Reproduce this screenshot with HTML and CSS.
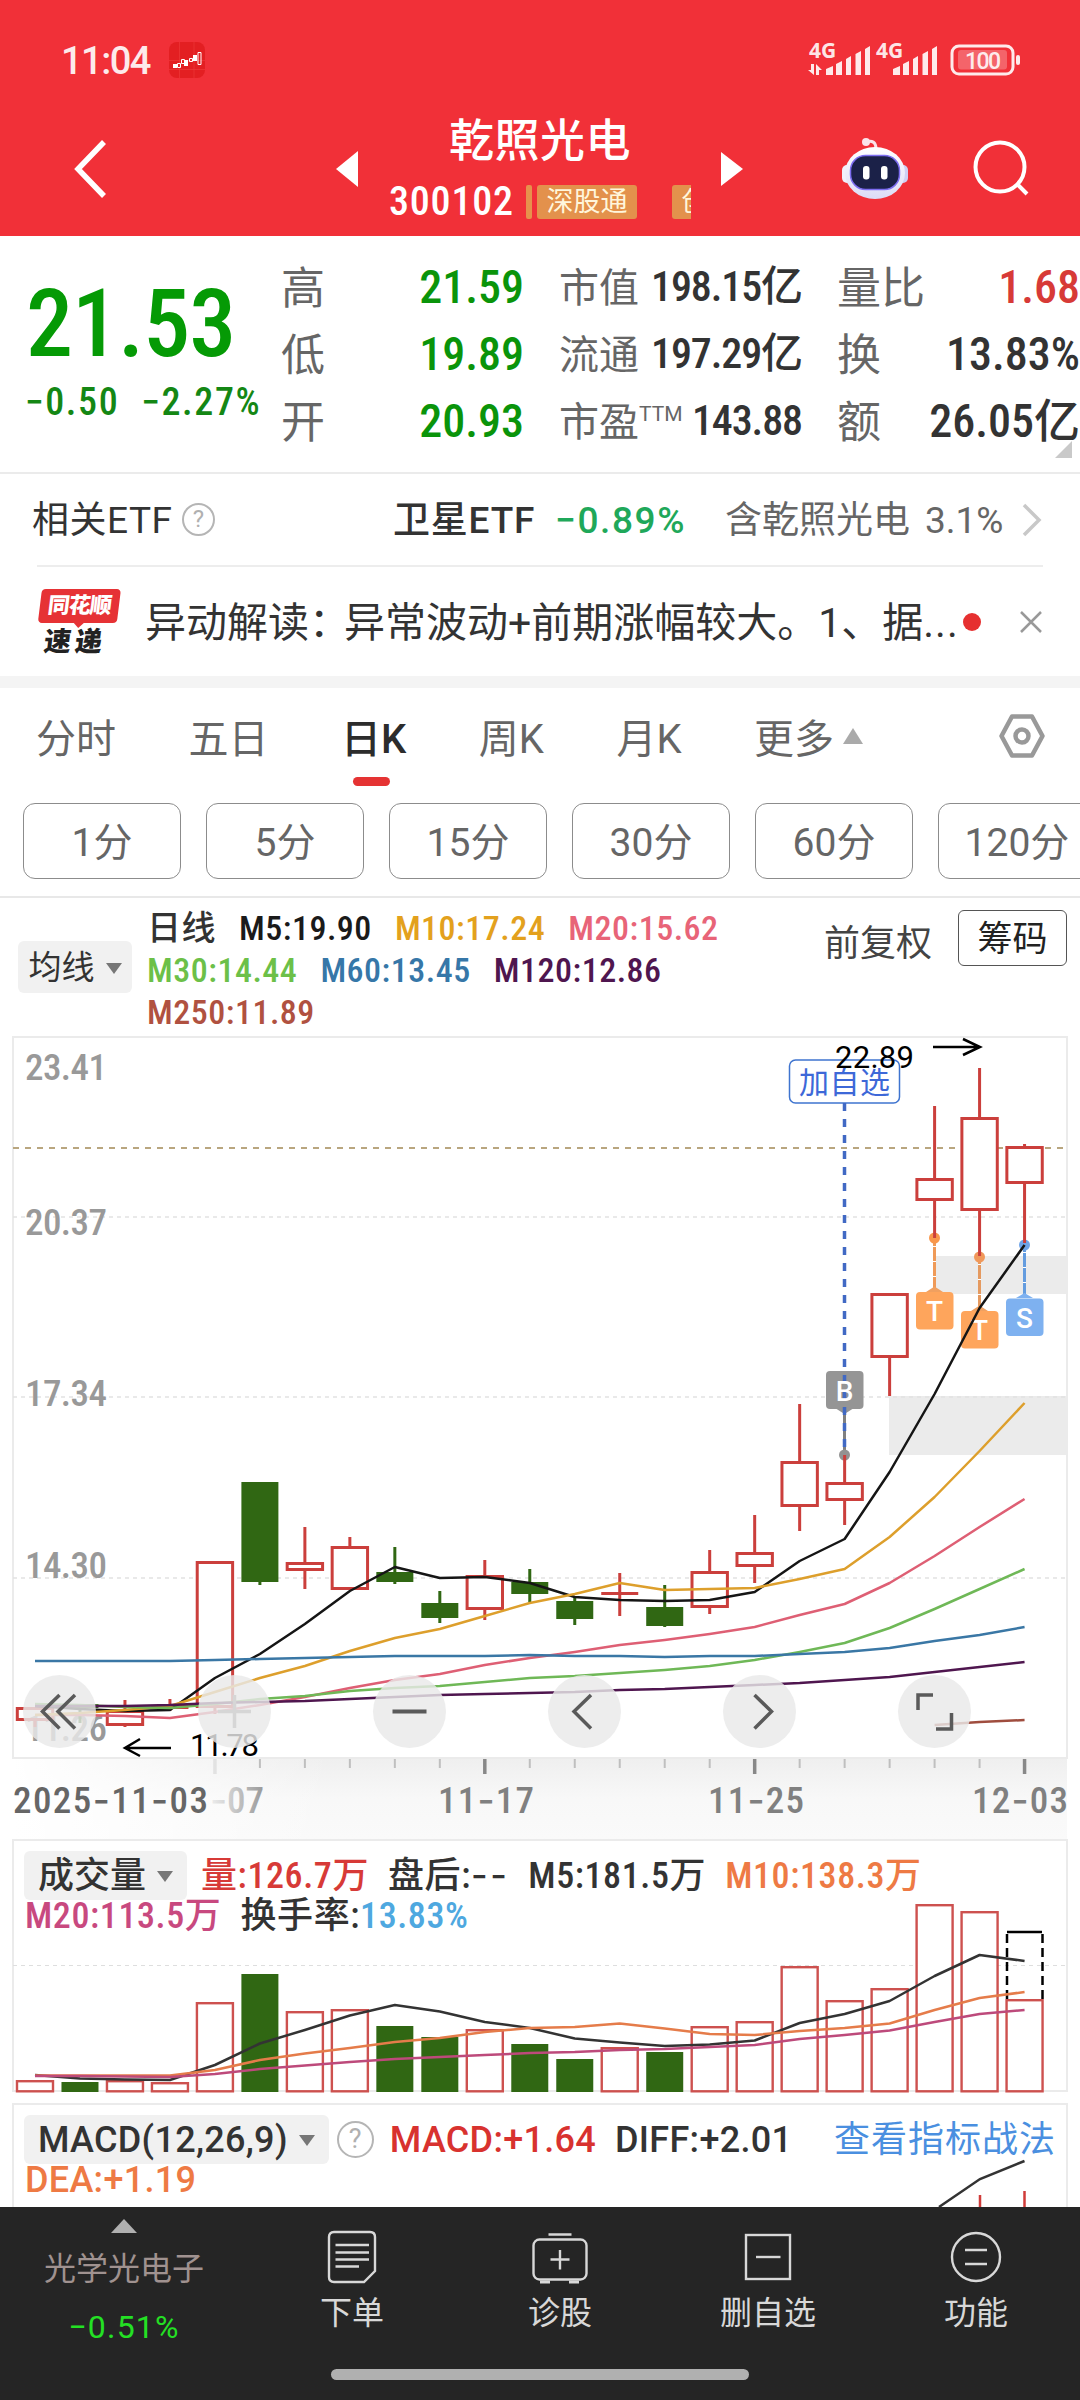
FILE: index.html
```html
<!DOCTYPE html>
<html lang="zh-CN">
<head>
    <meta charset="UTF-8">
    <meta name="viewport" content="width=device-width, initial-scale=1.0">
    <title>乾照光电 300102</title>
    <link rel="stylesheet" href="styles.css">
</head>
<body>

    <header class="top">
        <div class="status">
            <span class="clock">11:04</span>
            <svg class="app-icon" width="36" height="36" viewBox="0 0 36 36">
                <rect width="36" height="36" rx="8" fill="#e31f22"/>
                <path d="M10.500 0V36M0 18.500H36M0 27.500H36M25 0V36" stroke="#ee3c3c" stroke-width=".6"/>
                <path d="M4 22h4v4H4zM15 18h4v6h-4zM24 13h4v6h-4z" fill="#fff"/>
                <path d="M8.500 21.500h3v4h-3zM12.500 17.500h3v4h-3zM20.500 16.500h3v3h-3zM29 10.500h3v12h-3z" fill="none" stroke="#fff"/>
            </svg>
            <svg class="signals" width="215" height="40" viewBox="806 40 215 40">
                <g fill="#fff" fill-opacity=".9">
                    <text x="809" y="58" class="net">4G</text>
                    <path d="M826 75v-6l7-3v9zM836 75V64l6-3v14zM846 75V59l5-3v19zM855.500 75V54l5.500-3v24zM865 75V49l5-3v29z"/>
                    <path d="M811 64h3v11l-6-5h3zM816 75V64l6 6h-3v5z"/>
                    <text x="876" y="58" class="net">4G</text>
                    <path d="M893 75v-6l7-3v9zM903 75V64l6-3v14zM913 75V59l5-3v19zM922.500 75V54l5.500-3v24zM932 75V49l5-3v29z"/>
                    <rect x="958" y="50" width="49" height="19.500" rx="3" fill-opacity=".25"/>
                    <rect x="1016" y="55" width="4" height="10" rx="2"/>
                    <text x="965" y="69" class="pct" textLength="36">100</text>
                </g>
                <rect x="952" y="46" width="61" height="28" rx="7" fill="none" stroke="#fff" stroke-opacity=".9" stroke-width="3"/>
            </svg>
        </div>
        <div class="nav">
            <svg class="back" width="36" height="62" viewBox="0 0 36 62"><path d="M31 4 5 31 31 58" fill="none" stroke="#fff" stroke-width="5.500"/></svg>
            <svg class="prev" width="22" height="36" viewBox="0 0 22 36"><path d="M0 18 22 0V36z" fill="#fff"/></svg>
            <div class="stock">
                <h1>乾照光电</h1>
                <div class="code-row">
                    <span class="num code">300102</span>
                    <i class="tag-bar"></i>
                    <span class="tag">深股通</span>
                    <span class="tag next-tag">创业板</span>
                </div>
            </div>
            <svg class="next" width="22" height="34" viewBox="0 0 22 34"><path d="M0 0 22 17 0 34z" fill="#fff"/></svg>
            <svg class="robot" width="66" height="62" viewBox="842 137 66 62">
                <defs>
                    <linearGradient id="shell" x1="0" y1="0" x2="0" y2="1">
                        <stop offset="0" stop-color="#fff"/>
                        <stop offset="1" stop-color="#dcdcf6"/>
                    </linearGradient>
                </defs>
                <path d="M866 141c6-2 10 0 10 7" fill="none" stroke="#fbe3ea" stroke-width="3"/>
                <circle cx="866" cy="141" r="4" fill="#fbe3ea"/>
                <rect x="842" y="164" width="12" height="18" rx="5" fill="#f1f1fc"/>
                <rect x="896" y="164" width="12" height="18" rx="5" fill="#cfd0f4"/>
                <ellipse cx="875" cy="172" rx="30" ry="26" fill="url(#shell)"/>
                <rect x="850.500" y="154.500" width="49" height="34" rx="15" fill="#1b2148" stroke="#7d6df0" stroke-width="1.500"/>
                <rect x="863" y="165" width="6.500" height="13.500" rx="3" fill="#fff"/>
                <rect x="881" y="165" width="6.500" height="13.500" rx="3" fill="#fff"/>
            </svg>
            <svg class="search" width="58" height="58" viewBox="0 0 58 58"><g fill="none" stroke="#fff" stroke-width="4"><circle cx="27" cy="27" r="24.500"/><path d="M43.500 43.500 54 54"/></g></svg>
        </div>
    </header>

    <section class="quote">
        <div class="price-box">
            <div class="num price">21.53</div>
            <div class="num change"><span>−0.50</span><span>−2.27%</span></div>
        </div>
        <dl class="col col-a">
            <div><dt>高</dt><dd class="num green">21.59</dd></div>
            <div><dt>低</dt><dd class="num green">19.89</dd></div>
            <div><dt>开</dt><dd class="num green">20.93</dd></div>
        </dl>
        <dl class="col col-b">
            <div><dt>市值</dt><dd class="num">198.15亿</dd></div>
            <div><dt>流通</dt><dd class="num">197.29亿</dd></div>
            <div><dt>市盈<sup>TTM</sup></dt><dd class="num">143.88</dd></div>
        </dl>
        <dl class="col col-c">
            <div><dt>量比</dt><dd class="num red">1.68</dd></div>
            <div><dt>换</dt><dd class="num">13.83%</dd></div>
            <div><dt>额</dt><dd class="num">26.05亿</dd></div>
        </dl>
        <i class="corner"></i>
    </section>

    <section class="etf">
        <span class="etf-label">相关ETF</span>
        <span class="help">?</span>
        <span class="etf-name">卫星ETF</span>
        <span class="etf-change">−0.89%</span>
        <span class="etf-hold">含乾照光电</span>
        <span class="etf-pct">3.1%</span>
        <svg width="20" height="34" viewBox="0 0 20 34"><path d="M2 2 17 17 2 32" fill="none" stroke="#c8c8c8" stroke-width="3.500"/></svg>
    </section>

    <section class="news">
        <div class="logo"><b>同花顺</b><em>速递</em></div>
        <p>异动解读<span class="colon">：</span>异常波动+前期涨幅较大。1、据<span class="dots">...</span></p>
        <i class="dot"></i>
        <svg width="22" height="22" viewBox="0 0 22 22"><path d="M1 1 21 21M21 1 1 21" stroke="#999" stroke-width="2.500"/></svg>
    </section>

    <nav class="tabs">
        <span>分时</span>
        <span>五日</span>
        <span class="active">日K</span>
        <span>周K</span>
        <span>月K</span>
        <span>更多</span>
        <i class="up"></i>
        <svg width="46" height="46" viewBox="0 0 46 46"><g fill="none" stroke="#999" stroke-width="4.500"><path d="M13 3.500H33L43.500 23 33 42.500H13L2.500 23z" stroke-linejoin="round"/><circle cx="23" cy="23" r="6.500"/></g></svg>
    </nav>

    <div class="minutes">
        <button>1分</button>
        <button>5分</button>
        <button>15分</button>
        <button>30分</button>
        <button>60分</button>
        <button>120分</button>
    </div>

    <section class="ma">
        <span class="chip">均线<i class="down"></i></span>
        <div class="ma-list num">
            <div><span>日线</span><span style="color:#1a1a1a">M5:19.90</span><span style="color:#e3a11d">M10:17.24</span><span style="color:#e86478">M20:15.62</span></div>
            <div><span style="color:#6cc048">M30:14.44</span><span style="color:#3677a8">M60:13.45</span><span style="color:#4f164f">M120:12.86</span></div>
            <div><span style="color:#b05140">M250:11.89</span></div>
        </div>
        <span class="adjust">前复权</span>
        <span class="chips">筹码</span>
    </section>

    <svg class="kline" width="1080" height="805" viewBox="0 1034 1080 805">
        <defs>
            <linearGradient id="axisShade" x1="0" y1="0" x2="0" y2="1">
                <stop offset="0" stop-color="#efefef"/>
                <stop offset=".5" stop-color="#f8f8f8"/>
                <stop offset="1" stop-color="#fafafa"/>
            </linearGradient>
            <linearGradient id="axisFade">
                <stop offset="0" stop-color="#fff"/>
                <stop offset="1" stop-color="#fff" stop-opacity="0"/>
            </linearGradient>
            <linearGradient id="dateFade">
                <stop offset="0" stop-color="#eee"/>
                <stop offset="1" stop-color="#999"/>
            </linearGradient>
        </defs>
        <rect x="13" y="1759" width="1054" height="80" fill="url(#axisShade)"/>
        <rect x="13" y="1759" width="320" height="80" fill="url(#axisFade)"/>
        <rect x="934" y="1256" width="133" height="38" fill="#ebebeb"/>
        <rect x="889" y="1396" width="178" height="59" fill="#ebebeb"/>
        <rect x="13" y="1037" width="1054" height="721" fill="none" stroke="#ebebeb" stroke-width="2"/>
        <path d="M13 1217H1067M13 1397H1067M13 1578H1067" stroke="#e2e2e2" stroke-width="1.300" stroke-dasharray="4 4"/>
        <path d="M13 1148H1067" stroke="#b9a67f" stroke-width="2" stroke-dasharray="6 6"/>
        <g class="scale">
            <text x="25" y="1080" textLength="82">23.41</text>
            <text x="25" y="1235" textLength="82">20.37</text>
            <text x="25" y="1406" textLength="82">17.34</text>
            <text x="25" y="1578" textLength="82">14.30</text>
            <text x="25" y="1741" textLength="82">11.26</text>
        </g>
        <g id="ticks"></g>
        <g class="dates">
            <text x="13" y="1813" textLength="195" fill="#666">2025<tspan>-</tspan>11<tspan>-</tspan>03</text>
            <text x="210" y="1813" textLength="54" fill="url(#dateFade)"><tspan>-</tspan>07</text>
            <text x="438" y="1813" textLength="96">11<tspan>-</tspan>17</text>
            <text x="708" y="1813" textLength="96">11<tspan>-</tspan>25</text>
            <text x="972" y="1813" textLength="96">12<tspan>-</tspan>03</text>
        </g>

        <!-- trade markers -->
        <g stroke-width="3">
            <path d="M934.500 1238V1290" stroke="#ef9a58"/>
            <path d="M979.500 1257V1310" stroke="#e59a60"/>
            <path d="M1024.500 1245V1297" stroke="#649cdf"/>
            <path d="M844.500 1409V1455" stroke="#808080"/>
        </g>
        <path d="M934.500 1246V1290M979.500 1264V1310M1024.500 1252V1297" stroke="#fff" stroke-width="3" stroke-dasharray="1 14"/>
        <circle cx="934.500" cy="1238" r="5.500" fill="#f9974b"/>
        <circle cx="979.500" cy="1257" r="5.500" fill="#f0985a"/>
        <circle cx="1024.500" cy="1245" r="5.500" fill="#6fa4e8"/>
        <circle cx="844.500" cy="1455" r="5.500" fill="#929292"/>
        <path d="M926 1292 934.500 1286.500 943 1292z" fill="#f0a060"/>
        <path d="M971 1311 979.500 1305.500 988 1311z" fill="#f0a060"/>
        <path d="M1016 1298 1024.500 1293 1033 1298z" fill="#7eb1f0"/>
        <path d="M835 1408 844.500 1414 854 1408z" fill="#959595"/>
        <rect x="916" y="1292" width="37.500" height="37.500" rx="4" fill="#fea55c"/>
        <rect x="961" y="1311" width="37.500" height="37.500" rx="4" fill="#fea55c"/>
        <rect x="1006" y="1298.500" width="37.500" height="37.500" rx="4" fill="#7eb1f0"/>
        <rect x="826" y="1371" width="37.500" height="38" rx="4" fill="#959595"/>
        <g class="mark">
            <text x="934.500" y="1321">T</text>
            <text x="979.500" y="1340">T</text>
            <text x="1024.500" y="1328">S</text>
        </g>

        <rect x="789.500" y="1060" width="110" height="43" rx="6" fill="#fff" stroke="#3f74cf" stroke-width="1.500"/>
        <text x="799" y="1093" class="add" textLength="91">加自选</text>
        <path d="M844.500 1103V1452" stroke="#4169c4" stroke-width="3.500" stroke-dasharray="8 8"/>
        <text x="844.500" y="1401" class="mark">B</text>

        <g id="candles"></g>
        <g id="averages" fill="none" stroke-width="2.500" stroke-linejoin="round"></g>

        <g class="extreme">
            <text x="835" y="1068" textLength="79">22.89</text>
            <text x="190" y="1756" textLength="69">11.78</text>
        </g>
        <path d="M933 1047H979M963 1039 980 1047 963 1055M171 1748H126M140 1739 125 1748 140 1756" fill="none" stroke="#000" stroke-width="2.500"/>

        <!-- zoom / pan controls -->
        <g fill="#e9e9e9" fill-opacity=".82">
            <circle cx="59.500" cy="1711.500" r="36.500"/>
            <circle cx="234.500" cy="1711.500" r="36.500"/>
            <circle cx="409.500" cy="1711.500" r="36.500"/>
            <circle cx="584.500" cy="1711.500" r="36.500"/>
            <circle cx="759.500" cy="1711.500" r="36.500"/>
            <circle cx="934.500" cy="1711.500" r="36.500"/>
        </g>
        <path d="M234.500 1695V1728M218 1711.500H251" stroke="#d6d6d6" stroke-width="3.500"/>
        <g fill="none" stroke="#5a5a5a" stroke-width="3.500">
            <path d="M59.500 1695 42.500 1711.500 59.500 1728.500M75 1695 58 1711.500 75 1728.500"/>
            <path d="M392.500 1711.500H426.500" stroke-width="4"/>
            <path d="M591 1695 574 1711.500 591 1728.500"/>
            <path d="M754.500 1695 771.500 1711.500 754.500 1728.500"/>
            <path d="M918 1710V1695H933M936 1729H951.500V1713"/>
        </g>
    </svg>

    <section class="panel volume">
        <svg class="plot" width="1080" height="254" viewBox="0 1838 1080 254">
            <path d="M13 2090H1067" stroke="#ebebeb" stroke-width="2"/>
            <path d="M13 1964.500H1067" stroke="#dedede" stroke-width="1.200" stroke-dasharray="4 4"/>
            <g id="volumes"></g>
            <path d="M1007 1998V1931M1042.500 1998V1931" stroke="#000" stroke-width="2.500" stroke-dasharray="9 5"/>
            <path d="M1007 1931H1042" stroke="#000" stroke-width="2.500"/>
            <g id="volumeAverages" fill="none" stroke-width="2.500" stroke-linejoin="round"></g>
        </svg>
        <div class="legend num">
            <span class="chip">成交量<i class="down"></i></span>
            <span style="color:#d73a37">量:126.7万</span>
            <span>盘后:<span class="dash">--</span></span>
            <span>M5:181.5万</span>
            <span style="color:#ee7a44">M10:138.3万</span>
        </div>
        <div class="legend second num">
            <span style="color:#c8497f">M20:113.5万</span>
            <span>换手率:<b>13.83%</b></span>
        </div>
    </section>

    <section class="panel macd">
        <svg class="plot" width="1080" height="104" viewBox="0 2103 1080 104">
            <path d="M939 2207 980 2179 1024.500 2161" fill="none" stroke="#333" stroke-width="2.500"/>
            <path d="M980 2195V2207M1024.500 2191V2207" stroke="#d03c3a" stroke-width="2.500"/>
        </svg>
        <div class="legend">
            <span class="chip">MACD(12,26,9)<i class="down"></i></span>
            <span class="help">?</span>
            <span style="color:#d8322f">MACD:+1.64</span>
            <span>DIFF:+2.01</span>
            <a>查看指标战法</a>
        </div>
        <div class="legend second"><span style="color:#ee7a44">DEA:+1.19</span></div>
    </section>

    <footer class="bottom">
        <div class="items">
            <div class="sector">
                <i class="up"></i>
                <span>光学光电子</span>
                <span class="sector-change">−0.51%</span>
            </div>
            <div class="item">
                <svg width="52" height="56" viewBox="0 0 52 56"><g fill="none" stroke="#d8d8d8" stroke-width="2.400"><path d="M8 3H44q5 0 5 5V42L38 53H8q-5 0-5-5V8q0-5 5-5z"/><path d="M9.500 16H43M9.500 23.500H43M9.500 30.500H43M9.500 37.500H33"/></g></svg>
                <span>下单</span>
            </div>
            <div class="item">
                <svg width="58" height="56" viewBox="0 0 58 56"><g fill="none" stroke="#d8d8d8" stroke-width="2.400"><rect x="2.500" y="10.500" width="53" height="40" rx="6"/><path d="M17.500 5.500H40.500M29 21V40.500M19.500 30.500H38.500"/><path d="M9 53H19M38 53H48" stroke-width="3"/></g></svg>
                <span>诊股</span>
            </div>
            <div class="item">
                <svg width="52" height="56" viewBox="0 0 52 56"><g fill="none" stroke="#d8d8d8" stroke-width="2.400"><rect x="4" y="6" width="44" height="44"/><path d="M14 28H38.500"/></g></svg>
                <span>删自选</span>
            </div>
            <div class="item">
                <svg width="52" height="56" viewBox="0 0 52 56"><g fill="none" stroke="#d8d8d8" stroke-width="2.400"><circle cx="26" cy="28" r="24"/><path d="M15 21H37M15 35H37"/></g></svg>
                <span>功能</span>
            </div>
        </div>
        <div class="home-bar"></div>
    </footer>

    <script src="script.js"></script>
</body>
</html>
```

FILE: styles.css
```css
* { margin: 0; padding: 0; box-sizing: border-box; }

body {
    width: 1080px;
    height: 2400px;
    overflow: hidden;
    background: #fff;
    color: #333;
    font-family: Roboto, "Noto Sans CJK SC", sans-serif;
    line-height: 1.2;
    display: flex;
    flex-direction: column;
}

body > * { flex: none; }
svg { display: block; flex: none; }
i, em, b { font-style: normal; }

.num {
    font-weight: 500;
    font-stretch: 87.5%;
}
.green { color: #0a940a; }
.red { color: #d73a37; }

.up, .down {
    display: inline-block;
    border: 8px solid transparent;
}
.up { border-top: 0; border-bottom: 16px solid #aaa; }
.down { border-bottom: 0; border-top: 11px solid #777; }

.help {
    display: flex;
    align-items: center;
    justify-content: center;
    width: 33px;
    height: 33px;
    border: 2px solid #b5b5b5;
    border-radius: 50%;
    color: #b0b0b0;
    font-size: 24px;
}

/* header */
.top {
    height: 236px;
    background: #f13038;
    color: #fff;
}
.status {
    display: flex;
    align-items: center;
    height: 120px;
    padding-left: 61px;
}
.clock {
    width: 108px;
    padding-top: 3px;
    font-size: 38px;
    font-weight: 500;
    letter-spacing: -1.500px;
    opacity: .9;
}
.signals { margin-left: 601px; overflow: visible; }
.net { font: 700 21px "Noto Sans", sans-serif; }
.pct { font: 500 23px Roboto, sans-serif; }

.nav {
    display: flex;
    align-items: center;
    height: 97px;
    padding-left: 73px;
}
.prev { margin-left: 227px; }
.stock {
    width: 302px;
    margin: -2px 30px 0 31px;
    overflow: hidden;
}
h1 {
    height: 69px;
    line-height: 58px;
    text-align: center;
    font-size: 45px;
    font-weight: 500;
    letter-spacing: .5px;
}
.code-row {
    display: flex;
    align-items: center;
    height: 40px;
}
.code {
    width: 137px;
    font-size: 40px;
    letter-spacing: .8px;
    flex: none;
}
.tag-bar { width: 6px; height: 34px; background: #e6914c; border-radius: 2px; flex: none; }
.tag {
    flex: none;
    margin-left: 5px;
    width: 100px;
    height: 34px;
    line-height: 35px;
    background: #e3914c;
    border-radius: 3px;
    color: #fff6dc;
    font-size: 27px;
    text-align: center;
}
.next-tag { margin-left: 35px; }
.robot { margin-left: 99px; }
.search { margin-left: 65px; }

/* quote */
.quote {
    position: relative;
    display: flex;
    height: 238px;
    padding: 18px 0 0 26px;
    border-bottom: 2px solid #ebebeb;
}
.price-box { width: 255px; color: #069406; }
.price {
    height: 125px;
    line-height: 140px;
    color: #059a05;
    font-size: 94px;
    letter-spacing: -1px;
}
.change {
    display: flex;
    gap: 22px;
    font-size: 38px;
    line-height: 45px;
    letter-spacing: 1.600px;
    margin: 1px 0 0 -1px;
    color: #148714;
}
.col div {
    display: flex;
    align-items: center;
    justify-content: space-between;
    height: 67px;
}
dt { color: #666; white-space: nowrap; padding-top: 3px; }
dd { white-space: nowrap; }
.col-a { width: 243px; }
.col-a dt, .col-c dt { font-size: 44px; }
.col-a dd, .col-c dd { font-size: 46px; }
.col-b { width: 243px; margin-left: 35px; }
.col-b dt { font-size: 40px; }
.col-b dd { font-size: 42px; letter-spacing: -1.100px; }
.col-c { width: 243px; margin-left: 35px; }
sup { font-size: 21px; vertical-align: 15px; line-height: 0; }
.corner {
    position: absolute;
    right: 8px;
    bottom: 14px;
    border-left: 17px solid transparent;
    border-bottom: 17px solid #c9c9c9;
}

/* etf */
.etf {
    display: flex;
    align-items: center;
    height: 93px;
    margin: 0 37px;
    border-bottom: 2px solid #ededed;
    font-size: 37px;
}
.etf span:not(.help) { padding-top: 4px; }
.etf-label { width: 150px; margin-left: -5px; letter-spacing: .5px; }
.etf-name { width: 162px; margin-left: 178px; font-weight: 500; letter-spacing: .8px; }
.etf-change { width: 170px; color: #1fa85a; font-weight: 500; letter-spacing: 1.600px; }
.etf-hold { width: 200px; color: #666; }
.etf-pct { width: 97px; color: #666; }

/* news */
.news {
    display: flex;
    align-items: center;
    height: 109px;
    padding: 0 0 0 38px;
}
.logo {
    width: 79px;
    margin-right: 28px;
    text-align: center;
    transform: skewX(-7deg);
}
.logo b {
    display: block;
    position: relative;
    height: 34px;
    line-height: 34px;
    background: #e63235;
    border-radius: 4px;
    color: #fff;
    font-size: 22px;
    font-weight: 900;
    letter-spacing: -1px;
}
.logo b::after {
    content: "";
    position: absolute;
    left: 36px;
    top: 34px;
    border: 5px solid transparent;
    border-top-color: #e63235;
    border-bottom: 0;
}
.logo em {
    display: block;
    height: 31px;
    line-height: 38px;
    color: #222;
    font-size: 27px;
    font-weight: 900;
    letter-spacing: 4px;
}
.news p {
    width: 818px;
    padding-top: 4px;
    white-space: nowrap;
    font-size: 41px;
}
.colon { letter-spacing: -6px; }
.dots { letter-spacing: 1px; }
.dot { width: 18px; height: 18px; border-radius: 50%; background: #e63030; }
.news svg { margin-left: 39px; }

/* tabs */
.tabs {
    display: flex;
    align-items: center;
    height: 113px;
    padding: 0 0 5px 36px;
    border-top: 12px solid #f4f4f4;
    color: #666;
    font-size: 40px;
}
.tabs span { margin-right: 72.500px; padding-top: 7px; white-space: nowrap; }
.tabs .active {
    position: relative;
    color: #2c2c2c;
    font-weight: 500;
}
.tabs .active::after {
    content: "";
    position: absolute;
    left: 12px;
    bottom: -22px;
    width: 37px;
    height: 9px;
    border-radius: 5px;
    background: #e53333;
}
.tabs span:nth-child(6) { margin-right: 9px; }
.tabs .up { border-left-width: 10px; border-right-width: 10px; }
.tabs svg { margin-left: auto; margin-right: 35px; }

.minutes {
    display: flex;
    gap: 25px;
    height: 109px;
    padding: 14px 0 0 23px;
    border-bottom: 2px solid #e8e8e8;
    overflow: hidden;
}
.minutes button {
    flex: none;
    width: 158px;
    height: 76px;
    padding-top: 5px;
    background: #fff;
    border: 1px solid #8c8c8c;
    border-radius: 12px;
    color: #666;
    font-family: inherit;
    font-size: 39px;
    line-height: 1.2;
}

/* moving averages */
.ma {
    display: flex;
    height: 136px;
}
.chip {
    display: flex;
    align-items: center;
    justify-content: center;
    gap: 11px;
    padding-top: 2px;
    background: #f1f1f1;
    border-radius: 6px;
}
.ma > .chip {
    width: 114px;
    height: 52px;
    margin: 43px 0 0 18px;
    font-size: 33px;
}
.ma-list {
    width: 693px;
    padding-top: 9px;
    margin-left: 15px;
    font-size: 34px;
    letter-spacing: .5px;
}
.ma-list div { display: flex; gap: 23px; height: 42px; line-height: 42px; }
.adjust {
    width: 134px;
    margin: 20px 0 0 -16px;
    line-height: 52px;
    color: #444;
    font-size: 36px;
}
.chips {
    width: 109px;
    height: 56px;
    line-height: 57px;
    margin-top: 12px;
    border: 1.500px solid #555;
    border-radius: 6px;
    text-align: center;
    font-size: 35px;
    color: #222;
}

/* charts */
.kline text { font-family: Roboto, "Noto Sans CJK SC", sans-serif; }
.scale { fill: #999; font-size: 37px; font-weight: 500; font-stretch: 87.5%; }
.dates { fill: #808080; font-size: 37px; font-weight: 500; font-stretch: 87.5%; }
.kline .dates tspan, .dash { font-family: Inter, sans-serif; }
.extreme { font-size: 31px; }
.mark { fill: #fff; font-size: 28px; font-weight: 500; text-anchor: middle; }
.add { fill: #3d68d8; font-size: 30px; }

.panel {
    position: relative;
    margin: 0 12px;
    border: 2px solid #ebebeb;
    border-bottom: 0;
}
.plot { position: absolute; left: -14px; top: -2px; }
.volume { height: 253px; }
.macd { height: 104px; margin-top: 11px; }
.legend {
    position: relative;
    display: flex;
    align-items: center;
    gap: 19px;
    height: 50px;
    margin: 9px 0 0 10px;
    font-size: 36px;
    letter-spacing: .6px;
    white-space: nowrap;
}
.legend > span:not(.chip):not(.help), .legend a { padding-top: 3px; }
.legend .chip { height: 49px; padding: 3px 14px 0; margin-right: -5px; letter-spacing: 0; }
.legend.second { height: 40px; margin: -6px 0 0 11px; line-height: 40px; }
.legend a { color: #4a8fe0; margin: 0 10px 0 auto; letter-spacing: 1px; }
.legend b { font-weight: 500; color: #4ea8e0; }
.dash { letter-spacing: 2.500px; }
.macd .legend { font-weight: 500; letter-spacing: .3px; }
.macd .legend .chip { letter-spacing: .3px; margin-right: 0; }
.macd .legend a { font-weight: 400; }
.macd .help { width: 37px; height: 37px; margin: 0 -3px 0 -11px; font-size: 27px; font-weight: 400; }

/* bottom bar */
.bottom {
    position: relative;
    height: 193px;
    background: #252525;
    color: #d8d8d8;
}
.items { display: flex; }
.sector {
    width: 248px;
    display: flex;
    flex-direction: column;
    align-items: center;
    padding-top: 12px;
    color: #a09290;
    font-size: 32px;
}
.sector .up { border-width: 0 13px 14px; border-bottom-color: #b0b0b0; }
.sector span { line-height: 46px; margin-top: 13px; }
.sector .sector-change { color: #24e024; margin-top: 12px; letter-spacing: 1.200px; }
.item {
    width: 208px;
    display: flex;
    flex-direction: column;
    align-items: center;
    padding-top: 22px;
    font-size: 32px;
}
.item span { line-height: 48px; margin-top: 4px; }
.home-bar {
    width: 418px;
    height: 11px;
    margin: 19px auto 0;
    border-radius: 6px;
    background: #b0b0b0;
}
```

FILE: script.js
```js
const SVG = "http://www.w3.org/2000/svg";
const RED = "#cb3f3c";
const GREEN = "#306713";
const xAt = i => 35 + i * 44.98;

function add(parent, name, attrs) {
    const el = document.createElementNS(SVG, name);
    for (const key in attrs) el.setAttribute(key, attrs[key]);
    document.getElementById(parent).appendChild(el);
}

// [body top, body bottom, high, low, up]
const candles = [
    [1707, 1721, 1707, 1727, 1], [1704, 1708, 1704, 1723, 0], [1710, 1726, 1700, 1727, 1],
    [1705, 1709, 1699, 1711, 1], [1561, 1708, 1561, 1714, 1], [1482, 1582, 1482, 1585, 0],
    [1562, 1571, 1527, 1589, 1], [1546, 1590, 1537, 1590, 1], [1572, 1582, 1547, 1584, 0],
    [1603, 1618, 1591, 1623, 0], [1575, 1610, 1560, 1620, 1], [1582, 1594, 1569, 1602, 0],
    [1601, 1619, 1597, 1625, 0], [1592, 1595, 1573, 1616, 1], [1607, 1626, 1585, 1627, 0],
    [1571, 1608, 1550, 1614, 1], [1552, 1567, 1515, 1583, 1], [1461, 1507, 1404, 1531, 1],
    [1482, 1501, 1455, 1525, 1], [1293, 1358, 1293, 1396, 1], [1178, 1201, 1106, 1238, 1],
    [1117, 1211, 1068, 1256, 1], [1146, 1184, 1144, 1243, 1]
];

candles.forEach(([top, bottom, high, low, up], i) => {
    const x = xAt(i);
    const color = up ? RED : GREEN;
    add("candles", "path", {
        d: `M${x} ${high}V${top}M${x} ${bottom}V${low}`,
        stroke: color, "stroke-width": 3
    });
    if (up && bottom - top > 4) {
        add("candles", "rect", {
            x: x - 17.7, y: top + 1.5, width: 35.4, height: bottom - top - 3,
            fill: i < 3 ? "none" : "#fff", stroke: color, "stroke-width": 3
        });
    } else {
        add("candles", "rect", { x: x - 18.5, y: top, width: 37, height: bottom - top, fill: color });
    }
});

function drawLine(group, color, values, start = 0) {
    const points = values.map((y, i) => `${xAt(start + i)},${y}`).join(" ");
    add(group, "polyline", { points, stroke: color });
}

drawLine("averages", "#de5f74", [1715, 1715, 1716, 1718, 1712, 1705, 1697, 1688, 1680, 1674, 1665, 1658, 1652, 1645, 1640, 1634, 1627, 1615, 1604, 1583, 1556, 1527, 1499]);
drawLine("averages", "#151515", [1706, 1709, 1711, 1710, 1678, 1654, 1624, 1591, 1567, 1578, 1577, 1583, 1597, 1600, 1601, 1600, 1592, 1561, 1539, 1472, 1394, 1308, 1245]);
drawLine("averages", "#dd9f2c", [1715, 1713, 1710, 1706, 1692, 1678, 1666, 1651, 1638, 1629, 1616, 1603, 1594, 1583, 1590, 1589, 1588, 1579, 1569, 1537, 1497, 1451, 1403]);
drawLine("averages", "#6fb857", [1704, 1705, 1707, 1708, 1704, 1699, 1696, 1691, 1688, 1686, 1682, 1678, 1676, 1673, 1670, 1666, 1660, 1652, 1643, 1628, 1609, 1589, 1569]);
drawLine("averages", "#3a77a5", [1661, 1661, 1661, 1661, 1660, 1659, 1658, 1657, 1656, 1656, 1656, 1655, 1656, 1656, 1657, 1656, 1656, 1654, 1652, 1648, 1641, 1635, 1627]);
drawLine("averages", "#4f164f", [1706, 1706, 1706, 1705, 1703, 1702, 1701, 1699, 1697, 1695, 1694, 1693, 1692, 1690, 1689, 1687, 1685, 1683, 1680, 1677, 1672, 1667, 1662]);
drawLine("averages", "#9f4d3e", [1725, 1722, 1720], 20);

for (let i = 4; i < 23; i++) {
    const major = i === 10 || i === 16 || i === 22;
    add("ticks", "path", {
        d: `M${xAt(i)} 1759V${major || i === 4 ? 1774 : 1768}`,
        stroke: major ? "#888" : i === 4 ? "#e2e2e2" : "#bfbfbf",
        "stroke-width": major || i === 4 ? 3.500 : 2
    });
}

// [top, up]
const volumes = [
    [2079, 1], [2081, 0], [2079, 1], [2081, 1], [2001, 1], [1973, 0], [2010, 1], [2008, 1],
    [2025, 0], [2036, 0], [2028, 1], [2043, 0], [2058, 0], [2046, 1], [2051, 0], [2025, 1],
    [2020, 1], [1965, 1], [1999, 1], [1987, 1], [1903, 1], [1910, 1], [1998, 1]
];

volumes.forEach(([top, up], i) => {
    const x = xAt(i);
    if (up) {
        add("volumes", "rect", {
            x: x - 18, y: top + 1.2, width: 36, height: 2091.5 - top - 2.4,
            fill: "#fff", stroke: "#cd514f", "stroke-width": 2.4
        });
    } else {
        add("volumes", "rect", { x: x - 18.5, y: top, width: 37, height: 2091 - top, fill: GREEN });
    }
});

drawLine("volumeAverages", "#333", [2074, 2077.500, 2078.500, 2079, 2064, 2042.500, 2029, 2014.500, 2004, 2010.500, 2021, 2027, 2037.500, 2041.500, 2045, 2043.500, 2039.500, 2022, 2013, 2000, 1975, 1954, 1960]);
drawLine("volumeAverages", "#e57c4a", [2074.500, 2074.500, 2074.500, 2074.500, 2069, 2059, 2052.500, 2047, 2041, 2037, 2031, 2027, 2026, 2022.500, 2027.500, 2033, 2034, 2030, 2027, 2022.500, 2009, 1997, 1991]);
drawLine("volumeAverages", "#bd4a7b", [2075, 2075, 2075.500, 2076, 2073, 2068, 2064.500, 2061, 2058, 2056, 2054, 2052, 2051, 2049, 2048, 2046, 2044, 2038, 2034, 2029.500, 2021, 2013, 2009]);
```
